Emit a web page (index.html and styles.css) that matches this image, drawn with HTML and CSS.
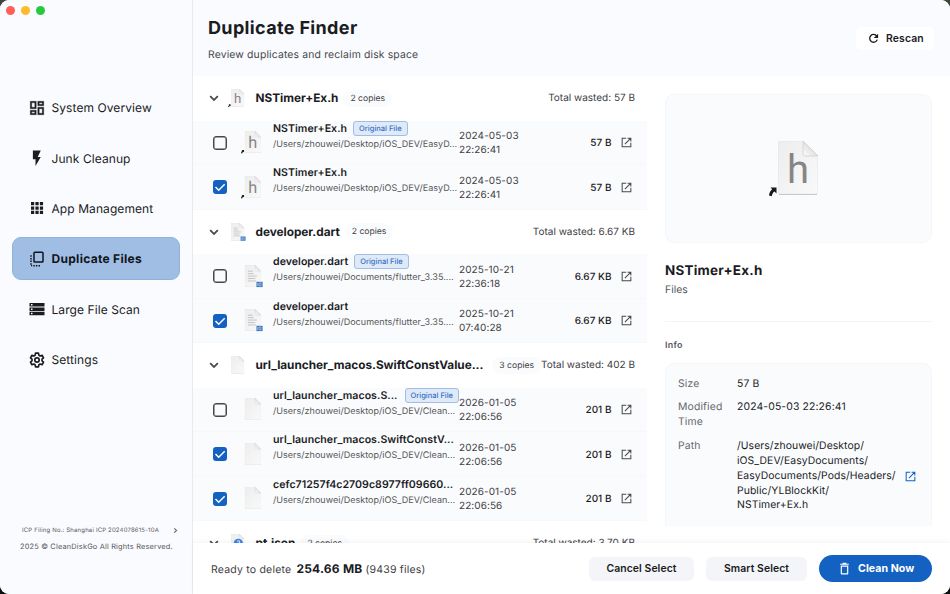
FILE: index.html
```
<!DOCTYPE html>
<html lang="en">
<head>
    <meta charset="UTF-8">
    <meta name="viewport" content="width=device-width, initial-scale=1.0">
    <title>CleanDiskGo</title>
    <link rel="stylesheet" href="styles.css">
</head>
<body>
    <!-- icons -->
    <svg class="defs" width="0" height="0">
        <defs>
            <linearGradient id="paper" x1="0" y1="0" x2="1" y2="1">
                <stop offset="0" stop-color="#ededed"/>
                <stop offset="1" stop-color="#f9f9f9"/>
            </linearGradient>
            <linearGradient id="fold" x1="0" y1="1" x2="1" y2="0">
                <stop offset="0" stop-color="#ffffff"/>
                <stop offset="0.5" stop-color="#e2e2e2"/>
                <stop offset="1" stop-color="#f4f4f4"/>
            </linearGradient>
        </defs>
        <symbol id="chevron" viewBox="0 0 24 24"><path d="M7.2 8.200L12 13l4.800-4.800L18.700 10 12 16.700 5.300 10z"/></symbol>
        <symbol id="chevron-right" viewBox="0 0 24 24"><path d="M10 6L8.6 7.4l4.6 4.6-4.6 4.6L10 18l6-6z"/></symbol>
        <symbol id="open" viewBox="0 0 24 24"><path d="M11.500 4H4v16h16v-7.500M14 4h6v6M19.500 4.500L9 15" fill="none" stroke="currentColor" stroke-width="1.900"/></symbol>
        <symbol id="page" viewBox="0 0 40 54">
            <path d="M1 53.500h38" stroke="#bdbdbd" stroke-width="1.500"/>
            <path d="M1 0h24l15 15v36a2 2 0 0 1-2 2H2a2 2 0 0 1-2-2V1a1 1 0 0 1 1-1z" fill="url(#paper)" stroke="#e2e2e2" stroke-width="0.700"/>
            <path d="M25 0v13a2 2 0 0 0 2 2h13z" fill="url(#fold)" stroke="#cacaca" stroke-width="0.700"/>
        </symbol>
        <symbol id="h-file" viewBox="0 0 54 56">
            <use href="#page" x="9" y="0" width="40" height="54"/>
            <text x="29" y="42" class="h-letter">h</text>
            <path d="M1.500 46.500h6v6l-2-2c-1.500 1-2.300 2.500-2.800 4.700L0 54.500c.3-2.700 1.300-4.600 3.200-6.200z" fill="#1b1b1b"/>
        </symbol>
        <symbol id="dart-file" viewBox="0 0 54 56">
            <use href="#page" x="9" y="0" width="40" height="54"/>
            <path d="M17 15h12M17 21h14M17 27h22M17 33h18M17 39h20" stroke="#b3b3b3" stroke-width="1.800"/>
            <path d="M38 41h15v13H38z" fill="#3f73bd"/>
            <path d="M41 44v7M44 44h5v7h-5z" stroke="#c9daf2" stroke-width="1.500" fill="none"/>
        </symbol>
        <symbol id="blank-file" viewBox="0 0 54 56">
            <use href="#page" x="9" y="0" width="40" height="54"/>
        </symbol>
        <symbol id="json-file" viewBox="0 0 54 56">
            <use href="#page" x="9" y="0" width="40" height="54"/>
            <circle cx="31" cy="28" r="14" fill="#3b82ea"/>
            <path d="M27 21h8v6h-4M26 32h9" stroke="#dceafd" stroke-width="3" fill="none"/>
        </symbol>
    </svg>

    <div class="window">
        <aside class="sidebar">
            <div class="lights">
                <span class="light red"></span>
                <span class="light yellow"></span>
                <span class="light green"></span>
            </div>
            <nav class="nav">
                <a class="nav-item">
                    <svg viewBox="0 0 24 24"><path d="M19 5v2h-4V5h4M9 5v6H5V5h4m10 8v6h-4v-6h4M9 17v2H5v-2h4M21 3h-8v6h8V3zM11 3H3v10h8V3zm10 8h-8v10h8V11zm-10 4H3v6h8v-6z" stroke="currentColor" stroke-width="0.400"/></svg>
                    <span>System Overview</span>
                </a>
                <a class="nav-item">
                    <svg viewBox="0 0 24 24"><path d="M6.500 2v11.500H10V22.500l7-12h-4L17 2z"/></svg>
                    <span>Junk Cleanup</span>
                </a>
                <a class="nav-item">
                    <svg viewBox="0 0 24 24"><path d="M4 4h4.300v4.300H4zM9.900 4h4.300v4.300H9.900zM15.800 4h4.300v4.300h-4.300zM4 9.900h4.300v4.300H4zM9.900 9.900h4.300v4.300H9.900zM15.800 9.900h4.300v4.300h-4.300zM4 15.800h4.300v4.300H4zM9.900 15.800h4.300v4.300H9.900zM15.800 15.800h4.300v4.300h-4.300z"/></svg>
                    <span>App Management</span>
                </a>
                <a class="nav-item active">
                    <svg viewBox="0 0 24 24"><path d="M9 2h10a2 2 0 0 1 2 2v11a2 2 0 0 1-2 2H9a2 2 0 0 1-2-2V4a2 2 0 0 1 2-2zm0 2v11h10V4z" fill-rule="evenodd"/><path d="M3 7h2v2H3zM3 10.500h2v2H3zM3 14h2v2H3zM3 17.500h2v2H3zM4 20h1.500v1.800H4zM7 20h2v2H7zM10.500 20h2v2h-2zM14 20h2v2h-2z"/></svg>
                    <span>Duplicate Files</span>
                </a>
                <a class="nav-item">
                    <svg viewBox="0 0 24 24"><path d="M2 4h20v4.600H2zm2 1.300v2h2v-2zM2 9.900h20v4.600H2zm2 1.300v2h2v-2zM2 15.800h20v4.600H2zm2 1.300v2h2v-2z" fill-rule="evenodd"/></svg>
                    <span>Large File Scan</span>
                </a>
                <a class="nav-item">
                    <svg viewBox="-1.500 -1.500 27 27"><path d="M9.800 1.800h4.400l.6 3 1.900 1.100 2.900-1 2.200 3.800-2.300 2v2.600l2.300 2-2.200 3.800-2.900-1-1.900 1.100-.6 3H9.800l-.6-3-1.900-1.100-2.900 1-2.200-3.800 2.300-2v-2.600l-2.300-2 2.200-3.800 2.900 1 1.900-1.100z" fill="none" stroke="currentColor" stroke-width="2.500" stroke-linejoin="round"/><circle cx="12" cy="12" r="3.300" fill="none" stroke="currentColor" stroke-width="2.500"/></svg>
                    <span>Settings</span>
                </a>
            </nav>
            <div class="legal">
                <div class="icp"><span>ICP Filing No.: Shanghai ICP 2024078615-10A</span><svg><use href="#chevron-right"/></svg></div>
                <p class="copyright">2025 © CleanDiskGo All Rights Reserved.</p>
            </div>
        </aside>

        <main class="main">
            <header class="header">
                <div>
                    <h1>Duplicate Finder</h1>
                    <p class="subtitle">Review duplicates and reclaim disk space</p>
                </div>
                <button class="rescan">
                    <svg viewBox="0 0 24 24"><path d="M18 7.500A7.200 7.200 0 1 0 19 14" fill="none" stroke="currentColor" stroke-width="2.400"/><path d="M20.500 3v8h-8z"/></svg>
                    <span>Rescan</span>
                </button>
            </header>

            <div class="content">
                <section class="list">
                    <div class="group">
                        <svg class="chev"><use href="#chevron"/></svg>
                        <svg class="group-icon"><use href="#h-file"/></svg>
                        <span class="group-name">NSTimer+Ex.h</span>
                        <span class="copies">2 copies</span>
                        <span class="wasted">Total wasted: 57 B</span>
                    </div>
                    <div class="row">
                        <span class="check"></span>
                        <svg class="file-icon"><use href="#h-file"/></svg>
                        <div class="file">
                            <div class="file-top"><span class="name">NSTimer+Ex.h</span><span class="badge">Original File</span></div>
                            <div class="path">/Users/zhouwei/Desktop/iOS_DEV/EasyD...</div>
                        </div>
                        <div class="date">2024-05-03<br>22:26:41</div>
                        <span class="size">57 B</span>
                        <svg class="open"><use href="#open"/></svg>
                    </div>
                    <div class="row">
                        <span class="check on"><svg viewBox="0 0 14 14"><path d="M2.500 7l3.200 3.200 6-6"/></svg></span>
                        <svg class="file-icon"><use href="#h-file"/></svg>
                        <div class="file">
                            <div class="file-top"><span class="name">NSTimer+Ex.h</span></div>
                            <div class="path">/Users/zhouwei/Desktop/iOS_DEV/EasyD...</div>
                        </div>
                        <div class="date">2024-05-03<br>22:26:41</div>
                        <span class="size">57 B</span>
                        <svg class="open"><use href="#open"/></svg>
                    </div>

                    <div class="group">
                        <svg class="chev"><use href="#chevron"/></svg>
                        <svg class="group-icon"><use href="#dart-file"/></svg>
                        <span class="group-name">developer.dart</span>
                        <span class="copies">2 copies</span>
                        <span class="wasted">Total wasted: 6.67 KB</span>
                    </div>
                    <div class="row">
                        <span class="check"></span>
                        <svg class="file-icon"><use href="#dart-file"/></svg>
                        <div class="file">
                            <div class="file-top"><span class="name">developer.dart</span><span class="badge">Original File</span></div>
                            <div class="path">/Users/zhouwei/Documents/flutter_3.35....</div>
                        </div>
                        <div class="date">2025-10-21<br>22:36:18</div>
                        <span class="size">6.67 KB</span>
                        <svg class="open"><use href="#open"/></svg>
                    </div>
                    <div class="row">
                        <span class="check on"><svg viewBox="0 0 14 14"><path d="M2.500 7l3.200 3.200 6-6"/></svg></span>
                        <svg class="file-icon"><use href="#dart-file"/></svg>
                        <div class="file">
                            <div class="file-top"><span class="name">developer.dart</span></div>
                            <div class="path">/Users/zhouwei/Documents/flutter_3.35....</div>
                        </div>
                        <div class="date">2025-10-21<br>07:40:28</div>
                        <span class="size">6.67 KB</span>
                        <svg class="open"><use href="#open"/></svg>
                    </div>

                    <div class="group">
                        <svg class="chev"><use href="#chevron"/></svg>
                        <svg class="group-icon"><use href="#blank-file"/></svg>
                        <span class="group-name long">url_launcher_macos.SwiftConstValue...</span>
                        <span class="copies">3 copies</span>
                        <span class="wasted">Total wasted: 402 B</span>
                    </div>
                    <div class="row">
                        <span class="check"></span>
                        <svg class="file-icon"><use href="#blank-file"/></svg>
                        <div class="file">
                            <div class="file-top spread"><span class="name">url_launcher_macos.S...</span><span class="badge">Original File</span></div>
                            <div class="path">/Users/zhouwei/Desktop/iOS_DEV/Clean...</div>
                        </div>
                        <div class="date">2026-01-05<br>22:06:56</div>
                        <span class="size">201 B</span>
                        <svg class="open"><use href="#open"/></svg>
                    </div>
                    <div class="row">
                        <span class="check on"><svg viewBox="0 0 14 14"><path d="M2.500 7l3.200 3.200 6-6"/></svg></span>
                        <svg class="file-icon"><use href="#blank-file"/></svg>
                        <div class="file">
                            <div class="file-top"><span class="name">url_launcher_macos.SwiftConstV...</span></div>
                            <div class="path">/Users/zhouwei/Desktop/iOS_DEV/Clean...</div>
                        </div>
                        <div class="date">2026-01-05<br>22:06:56</div>
                        <span class="size">201 B</span>
                        <svg class="open"><use href="#open"/></svg>
                    </div>
                    <div class="row">
                        <span class="check on"><svg viewBox="0 0 14 14"><path d="M2.500 7l3.200 3.200 6-6"/></svg></span>
                        <svg class="file-icon"><use href="#blank-file"/></svg>
                        <div class="file">
                            <div class="file-top"><span class="name">cefc71257f4c2709c8977ff09660...</span></div>
                            <div class="path">/Users/zhouwei/Desktop/iOS_DEV/Clean...</div>
                        </div>
                        <div class="date">2026-01-05<br>22:06:56</div>
                        <span class="size">201 B</span>
                        <svg class="open"><use href="#open"/></svg>
                    </div>

                    <div class="group">
                        <svg class="chev"><use href="#chevron"/></svg>
                        <svg class="group-icon"><use href="#json-file"/></svg>
                        <span class="group-name">pt.json</span>
                        <span class="copies">2 copies</span>
                        <span class="wasted">Total wasted: 3.70 KB</span>
                    </div>
                </section>

                <section class="detail">
                    <div class="preview"><svg><use href="#h-file"/></svg></div>
                    <h2>NSTimer+Ex.h</h2>
                    <p class="kind">Files</p>
                    <h3>Info</h3>
                    <div class="info">
                        <span class="label">Size</span>
                        <span class="value">57 B</span>
                        <span class="label">Modified<br>Time</span>
                        <span class="value">2024-05-03 22:26:41</span>
                        <span class="label">Path</span>
                        <div class="value with-link">
                            <span>/Users/zhouwei/Desktop/<br>iOS_DEV/EasyDocuments/<br>EasyDocuments/Pods/Headers/<br>Public/YLBlockKit/<br>NSTimer+Ex.h</span>
                            <svg class="open blue"><use href="#open"/></svg>
                        </div>
                    </div>
                </section>
            </div>

            <footer class="footer">
                <p class="ready">Ready to delete <b>254.66 MB</b> <span>(9439 files)</span></p>
                <button class="btn cancel">Cancel Select</button>
                <button class="btn smart">Smart Select</button>
                <button class="clean">
                    <svg viewBox="0 0 24 24"><path d="M8.500 1.500h7V3H20v2.300H4V3h4.500zM5 6.500h14V21a2 2 0 0 1-2 2H7a2 2 0 0 1-2-2zm2.200 2.200v12.100h9.600V8.700z" fill-rule="evenodd"/></svg>
                    <span>Clean Now</span>
                </button>
            </footer>
        </main>
    </div>
</body>
</html>
```
FILE: styles.css
```
*{
    margin: 0;
    padding: 0;
    box-sizing: border-box;
}
body{
    height: 594px;
    overflow: hidden;
    background: linear-gradient(#3c463a, #0b0f0d 30%);
    font-family: Inter, "Liberation Sans", sans-serif;
    text-rendering: geometricPrecision;
    color: #1a1c1f;
}
svg{
    fill: currentColor;
    flex-shrink: 0;
}
button{
    border: none;
    font-family: inherit;
    color: inherit;
}
.defs{
    position: absolute;
}
.h-letter{
    font-family: Roboto, sans-serif;
    font-size: 40px;
    font-weight: 400;
    text-anchor: middle;
    fill: #858587;
}
.window{
    display: flex;
    width: 950px;
    height: 594px;
    border-radius: 9px;
    overflow: hidden;
    background: #fff;
}

/* sidebar */
.sidebar{
    width: 193px;
    flex-shrink: 0;
    display: flex;
    flex-direction: column;
    background: #fafbfe;
    border-right: 1px solid #e9eaed;
}
.lights{
    display: flex;
    gap: 6px;
    padding: 6px 6px 0;
    height: 86.2px;
}
.light{
    width: 9px;
    height: 9px;
    border-radius: 50%;
}
.red{ background: #fe5f58; }
.yellow{ background: #febb2e; }
.green{ background: #28c840; }
.nav{
    display: flex;
    flex-direction: column;
    gap: 7.4px;
    padding: 0 12px;
}
.nav-item{
    display: flex;
    align-items: center;
    gap: 6px;
    height: 43px;
    padding-left: 14.5px;
    border: 1px solid transparent;
    border-radius: 9px;
    font-size: 12px;
    letter-spacing: 0.08px;
}
.nav-item svg{
    width: 18px;
    height: 18px;
}
.nav-item.active{
    background: #a0bee4;
    border-color: #8fb1de;
    font-weight: 700;
    letter-spacing: 0.3px;
    color: #10151c;
}
.legal{
    margin-top: auto;
    padding: 0 12px 41.5px 20px;
    color: #55575b;
}
.icp{
    display: flex;
    align-items: center;
    justify-content: space-between;
    height: 14px;
    padding-left: 2px;
    font-size: 6px;
    letter-spacing: 0.17px;
}
.icp svg{
    width: 9px;
    height: 9px;
    stroke: currentColor;
}
.copyright{
    font-size: 7.4px;
    line-height: 12px;
    letter-spacing: 0.18px;
    margin-top: 3px;
    white-space: nowrap;
}

/* header */
.main{
    flex: 1;
    min-width: 0;
    display: flex;
    flex-direction: column;
}
.header{
    display: flex;
    justify-content: space-between;
    height: 76px;
    flex-shrink: 0;
    padding: 16px 16px 0 15px;
    background: #fafbfe;
}
h1{
    padding-top: 1px;
    font-size: 18px;
    line-height: 24px;
    font-weight: 700;
    letter-spacing: 0.35px;
}
.subtitle{
    margin-top: 4.500px;
    font-size: 10.4px;
    line-height: 17px;
    letter-spacing: 0.15px;
    color: #46484c;
}
.rescan{
    display: flex;
    align-items: center;
    gap: 6px;
    width: 78px;
    height: 23px;
    margin-top: 11px;
    padding-left: 11px;
    background: #fff;
    border-radius: 5px;
    font-size: 10.4px;
    font-weight: 600;
    letter-spacing: 0.15px;
}
.rescan svg{
    width: 13px;
    height: 13px;
}

/* duplicates list */
.content{
    display: flex;
    height: 467px;
    overflow: hidden;
}
.list{
    width: 454px;
    flex-shrink: 0;
}
.group{
    display: flex;
    align-items: center;
    height: 44.5px;
    padding: 0 12px 0 13px;
}
.chev{
    width: 16px;
    height: 16px;
    color: #46484c;
}
.group-icon{
    width: 18px;
    height: 18.5px;
    margin-left: 6px;
}
.group-name{
    margin-left: 9.500px;
    font-size: 11.8px;
    font-weight: 700;
    letter-spacing: -0.03px;
    white-space: nowrap;
}
.group-name.long{
    width: 232px;
}
.copies{
    margin-left: 5px;
    padding: 1px 7px 0;
    height: 17px;
    border-radius: 9px;
    background: #fafbfd;
    font-size: 8.6px;
    line-height: 16px;
    color: #3e4044;
    white-space: nowrap;
}
.group-name.long + .copies{
    margin-left: 7px;
}
.wasted{
    margin-left: auto;
    font-size: 10px;
    color: #3e4044;
    white-space: nowrap;
}
.row{
    display: flex;
    align-items: center;
    height: 44.5px;
    padding: 0 14.5px 0 20px;
    background: #fafbfd;
    box-shadow: inset 0 -1px #f7f8fa;
}
.check{
    width: 14px;
    height: 14px;
    border: 1px solid #46484c;
    box-shadow: inset 0 0 0 0.5px #46484c;
    border-radius: 3px;
    flex-shrink: 0;
}
.check.on{
    border: none;
    box-shadow: none;
    background: #1361c0;
}
.check svg{
    display: block;
    width: 14px;
    height: 14px;
    fill: none;
    stroke: #fff;
    stroke-width: 1.5;
}
.file-icon{
    width: 22px;
    height: 23px;
    margin-left: 13.5px;
}
.file{
    align-self: flex-start;
    width: 186px;
    margin-left: 10.5px;
    flex-shrink: 0;
    white-space: nowrap;
}
.file-top{
    display: flex;
    align-items: center;
    gap: 6px;
    height: 15px;
}
.file-top.spread{
    justify-content: space-between;
}
.name{
    font-size: 10.6px;
    font-weight: 600;
    letter-spacing: 0.03px;
}
.badge{
    height: 15px;
    padding: 0 5px;
    border: 1px solid #9fbee6;
    border-radius: 3px;
    background: #dfe9f7;
    font-size: 7.5px;
    line-height: 13px;
    font-weight: 500;
    letter-spacing: 0;
    color: #3070c6;
}
.path{
    font-size: 9px;
    line-height: 17px;
    letter-spacing: 0.03px;
    color: #55575b;
}
.date{
    padding-top: 1px;
    font-size: 10px;
    line-height: 14px;
    letter-spacing: 0.08px;
    color: #3e4044;
    white-space: nowrap;
}
.size{
    margin-left: auto;
    padding-top: 0.5px;
    font-size: 10px;
    font-weight: 500;
    white-space: nowrap;
}
.open{
    width: 13px;
    height: 13px;
    margin-left: 8px;
    color: #46484c;
}

/* detail panel */
.detail{
    flex: 1;
    height: 449.5px;
    overflow: hidden;
    padding: 18px 18px 0;
}
.preview{
    display: flex;
    align-items: center;
    justify-content: center;
    height: 149px;
    border: 1px solid #f5f6f9;
    border-radius: 9px;
    background: #fafbfd;
}
.preview svg{
    width: 54px;
    height: 56px;
    margin-right: 5px;
}
h2{
    margin-top: 19px;
    font-size: 13.4px;
    line-height: 18px;
    font-weight: 700;
    letter-spacing: 0.25px;
}
.kind{
    padding: 2px 0 23px;
    border-bottom: 1px solid #f3f4f6;
    font-size: 10.4px;
    line-height: 16px;
    color: #55575b;
}
h3{
    margin: 17px 0 10px;
    font-size: 8.9px;
    line-height: 14px;
    font-weight: 600;
    letter-spacing: 0.3px;
    color: #55575b;
}
.info{
    display: grid;
    grid-template-columns: 47px 1fr;
    column-gap: 12px;
    row-gap: 9px;
    height: 180px;
    align-content: start;
    padding: 12.500px 12px;
    border: 1px solid #f5f6f9;
    border-radius: 9px;
    background: #fafbfd;
    font-size: 10.4px;
    line-height: 14.85px;
}
.label{
    color: #66686c;
    letter-spacing: 0.15px;
}
.value{
    letter-spacing: 0.13px;
    white-space: nowrap;
}
.with-link{
    display: flex;
    align-items: center;
    letter-spacing: 0.07px;
}
.open.blue{
    color: #1361c0;
}

/* footer */
.footer{
    position: relative;
    display: flex;
    align-items: center;
    height: 51px;
    padding: 0 18px;
    background: #fff;
    box-shadow: 0 -2px 5px rgba(0, 0, 0, 0.04);
}
.ready{
    margin-right: auto;
    padding-bottom: 1px;
    font-size: 10.5px;
    letter-spacing: 0.2px;
    color: #3e4044;
}
.ready b{
    margin-left: 2px;
    font-size: 12px;
    color: #1a1c1f;
}
.btn{
    height: 24px;
    border-radius: 6px;
    background: #f4f5f8;
    font-size: 10.4px;
    font-weight: 600;
    letter-spacing: 0.08px;
}
.cancel{
    width: 105px;
}
.smart{
    width: 101px;
    margin-left: 12px;
}
.clean{
    display: flex;
    align-items: center;
    gap: 7px;
    width: 113px;
    height: 27px;
    margin-left: 12px;
    padding-left: 19px;
    border-radius: 14px;
    background: #1361c0;
    color: #fff;
    font-size: 10.6px;
    font-weight: 700;
    letter-spacing: 0.05px;
}
.clean svg{
    width: 13px;
    height: 13px;
}
```
